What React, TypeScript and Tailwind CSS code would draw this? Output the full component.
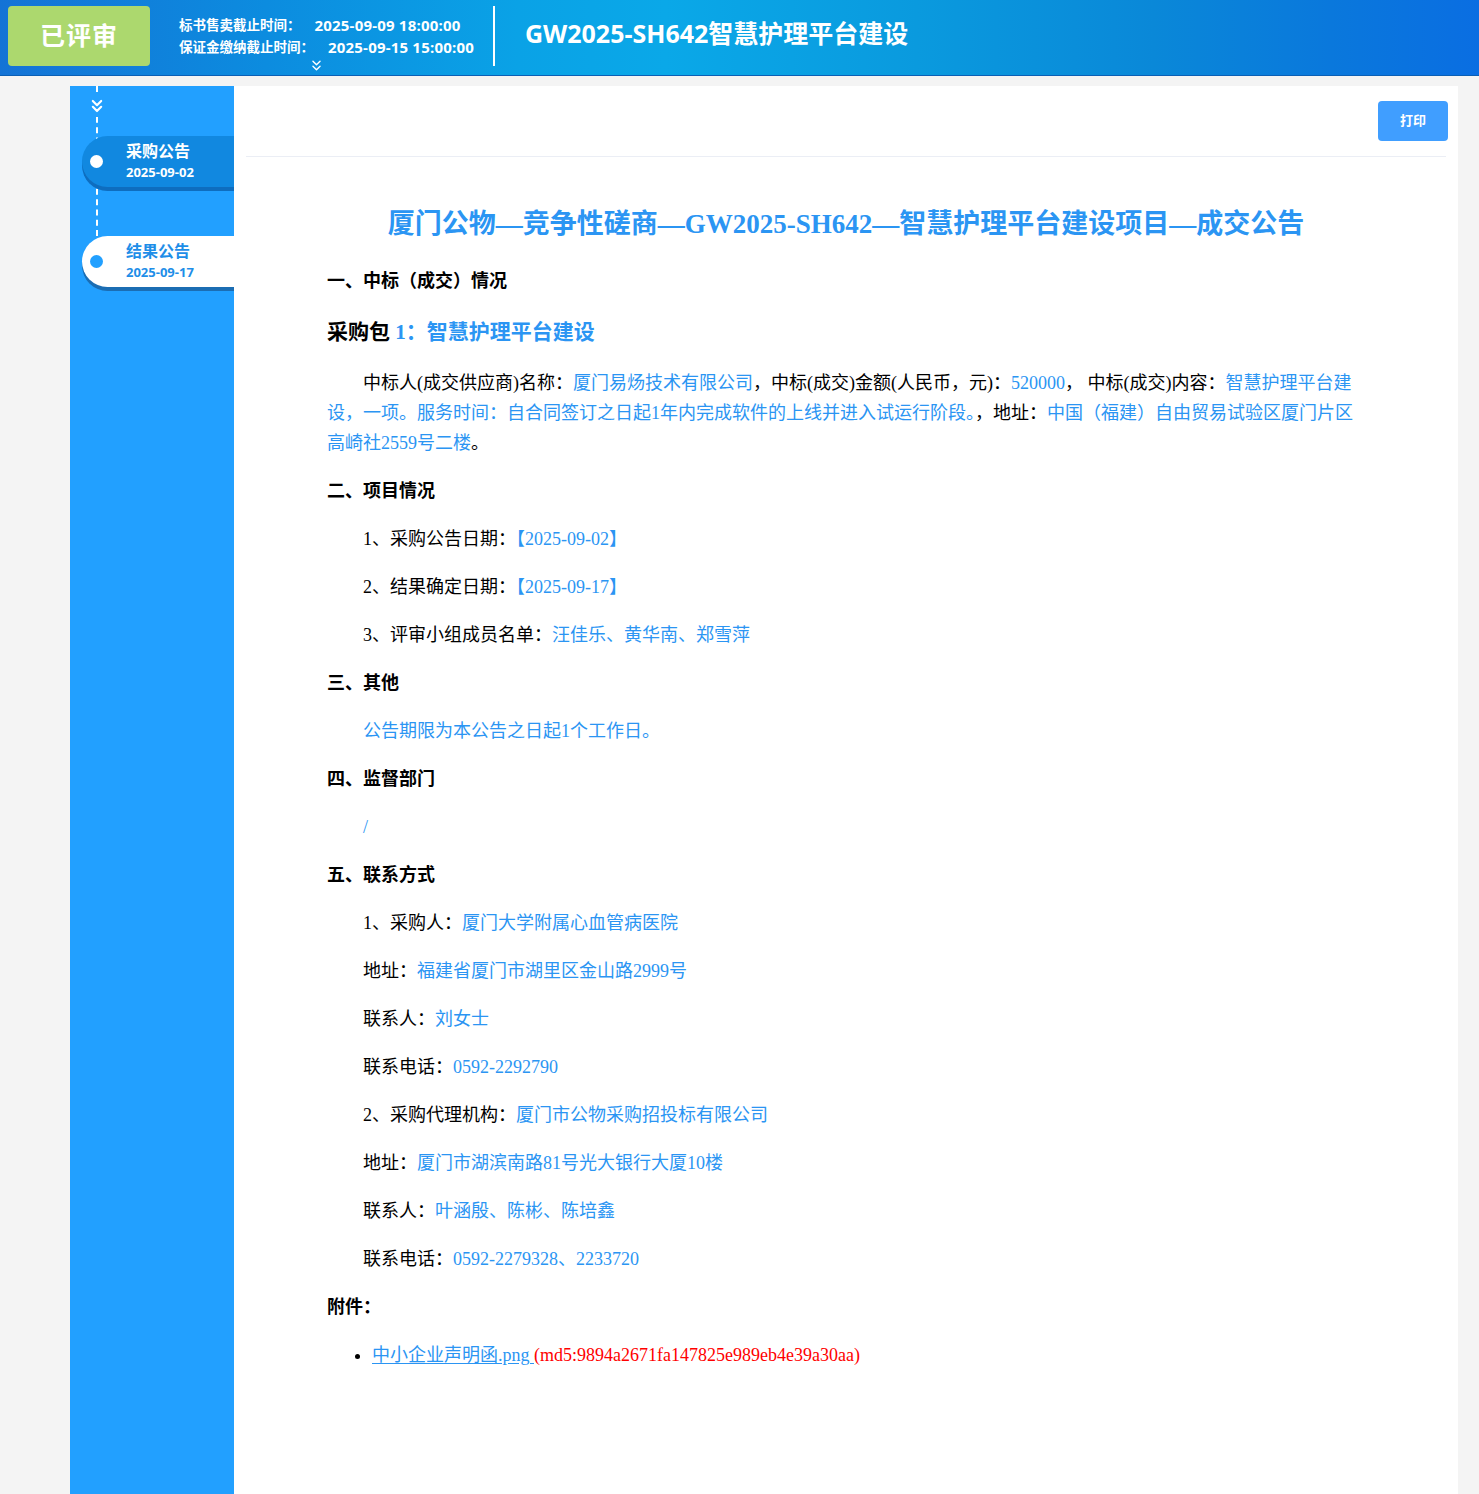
import { ChevronsDown } from "lucide-react";

const B = ({ children }: { children: React.ReactNode }) => (
  <span className="text-[#2b95f3]">{children}</span>
);

function Header() {
  return (
    <div className="relative h-[76px] bg-[linear-gradient(90deg,#1473d6_0%,#0c8cdf_18%,#0aa2e6_35%,#0aa8e8_45%,#0a9ade_62%,#0a88d8_78%,#0a78dc_90%,#0a6ee2_100%)] border-b border-[#0b5fb5] font-['Open_Sans','Noto_Sans_CJK_SC',sans-serif] text-white">
      <div className="flex items-start pt-[6px] pl-[8px]">
        <div className="flex h-[60px] w-[142px] items-center justify-center rounded-[4px] bg-[#acd86e] text-[25px] font-bold tracking-[1px]">
          已评审
        </div>

        <div className="ml-[29px] flex flex-col pt-[8px] text-[13.5px] font-bold leading-[22px]">
          <div className="flex">
            <span>标书售卖截止时间：</span>
            <span className="ml-[14px] text-[15px] tracking-[0.2px]">2025-09-09 18:00:00</span>
          </div>
          <div className="flex">
            <span>保证金缴纳截止时间：</span>
            <span className="ml-[14px] text-[15px] tracking-[0.2px]">2025-09-15 15:00:00</span>
          </div>
          <div className="ml-[129px] -mt-[1px]">
            <ChevronsDown size={17} strokeWidth={2} />
          </div>
        </div>

        <div className="ml-[19px] h-[60px] w-[2px] bg-white" />

        <div className="ml-[30px] flex h-[60px] items-center pb-[4px] text-[25px] font-bold">
          GW2025-SH642智慧护理平台建设
        </div>
      </div>
    </div>
  );
}

function Sidebar() {
  return (
    <div className="relative w-[164px] shrink-0 bg-[#22a0ff] font-['Open_Sans','Noto_Sans_CJK_SC',sans-serif]">
      {/* dashed timeline */}
      <div className="absolute left-[26px] top-0 h-[150px] border-l-2 border-dashed border-white" />
      <div className="absolute left-[17px] top-[9px] bg-[#22a0ff] py-[1px] text-white">
        <ChevronsDown size={20} strokeWidth={2.6} />
      </div>

      <div className="relative pt-[50px] pl-[12px]">
        <div className="flex h-[51px] items-center rounded-l-full bg-[#1188e0] shadow-[0_4px_0_#0e6dbf]">
          <div className="ml-[8px] h-[13px] w-[13px] rounded-full bg-white" />
          <div className="ml-[23px] -mt-[3px] flex flex-col text-white">
            <span className="text-[16px] font-semibold leading-[20px]">采购公告</span>
            <span className="mt-[3px] text-[13px] font-bold leading-[16px]">2025-09-02</span>
          </div>
        </div>

        <div className="mt-[49px] flex h-[51px] items-center rounded-l-full bg-white shadow-[0_4px_0_#1b6db3]">
          <div className="ml-[8px] h-[13px] w-[13px] rounded-full bg-[#22a0ff]" />
          <div className="ml-[23px] -mt-[3px] flex flex-col text-[#1e8ee8]">
            <span className="text-[16px] font-semibold leading-[20px]">结果公告</span>
            <span className="mt-[3px] text-[13px] font-bold leading-[16px]">2025-09-17</span>
          </div>
        </div>
      </div>
    </div>
  );
}

function Article() {
  const p = "mb-[18px] leading-[30px]";
  const h = "mb-[18px] font-bold leading-[30px]";
  const item = "mb-[18px] pl-[36px] leading-[30px]";
  return (
    <div className="px-[93px] pt-[43px] pb-[120px] font-['Liberation_Serif','Noto_Sans_CJK_SC',serif] text-[18px] text-black">
      <h1 className="mb-[18px] text-center text-[27px] font-bold leading-[48px] text-[#2b95f3]">
        厦门公物—竞争性磋商—GW2025-SH642—智慧护理平台建设项目—成交公告
      </h1>

      <div className={h}>一、中标（成交）情况</div>

      <div className="mb-[18px] text-[21px] font-bold leading-[36px]">
        采购包 <B>1：智慧护理平台建设</B>
      </div>

      <p className={`${p} indent-[36px]`}>
        中标人(成交供应商)名称：<B>厦门易炀技术有限公司</B>，中标(成交)金额(人民币，元)：<B>520000</B>， 中标(成交)内容：
        <B>智慧护理平台建设，一项。服务时间：自合同签订之日起1年内完成软件的上线并进入试运行阶段。</B>，地址：
        <B>中国（福建）自由贸易试验区厦门片区高崎社2559号二楼</B>。
      </p>

      <div className={h}>二、项目情况</div>
      <p className={item}>
        1、采购公告日期：<B>【2025-09-02】</B>
      </p>
      <p className={item}>
        2、结果确定日期：<B>【2025-09-17】</B>
      </p>
      <p className={item}>
        3、评审小组成员名单：<B>汪佳乐、黄华南、郑雪萍</B>
      </p>

      <div className={h}>三、其他</div>
      <p className={item}>
        <B>公告期限为本公告之日起1个工作日。</B>
      </p>

      <div className={h}>四、监督部门</div>
      <p className={item}>
        <B>/</B>
      </p>

      <div className={h}>五、联系方式</div>
      <p className={item}>
        1、采购人：<B>厦门大学附属心血管病医院</B>
      </p>
      <p className={item}>
        地址：<B>福建省厦门市湖里区金山路2999号</B>
      </p>
      <p className={item}>
        联系人：<B>刘女士</B>
      </p>
      <p className={item}>
        联系电话：<B>0592-2292790</B>
      </p>
      <p className={item}>
        2、采购代理机构：<B>厦门市公物采购招投标有限公司</B>
      </p>
      <p className={item}>
        地址：<B>厦门市湖滨南路81号光大银行大厦10楼</B>
      </p>
      <p className={item}>
        联系人：<B>叶涵殷、陈彬、陈培鑫</B>
      </p>
      <p className={item}>
        联系电话：<B>0592-2279328、2233720</B>
      </p>

      <div className={h}>附件：</div>
      <ul className="list-disc pl-[45px] leading-[30px]">
        <li>
          <a className="text-[#2b95f3] underline underline-offset-2">中小企业声明函.png </a>
          <span className="text-[#ff0000]">(md5:9894a2671fa147825e989eb4e39a30aa)</span>
        </li>
      </ul>
    </div>
  );
}

export default function App() {
  return (
    <div className="min-h-screen bg-[#f4f4f4]">
      <Header />
      <div className="ml-[70px] mt-[10px] flex w-[1388px] min-h-[1408px]">
        <Sidebar />
        <div className="flex-1 bg-white">
          <div className="flex justify-end pt-[15px] pr-[10px] pb-[15px]">
            <button className="h-[40px] w-[70px] rounded-[4px] bg-[#409eff] font-['Open_Sans','Noto_Sans_CJK_SC',sans-serif] text-[13px] font-semibold text-white">
              打印
            </button>
          </div>
          <div className="mx-[12px] border-t border-[#ebeef5]" />
          <Article />
        </div>
      </div>
    </div>
  );
}
